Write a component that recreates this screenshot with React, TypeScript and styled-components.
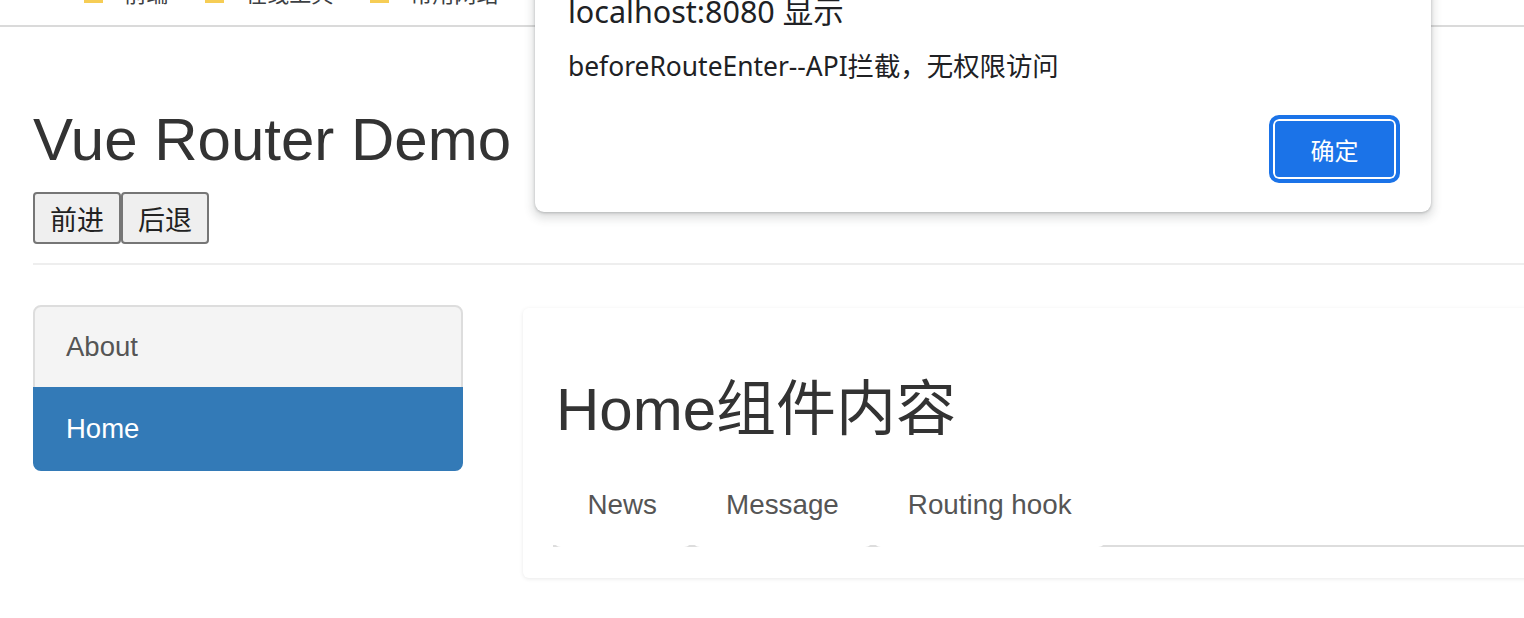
import React from 'react';
import styled, { createGlobalStyle } from 'styled-components';

const GlobalStyle = createGlobalStyle`
  html, body {
    margin: 0;
    padding: 0;
    background: #ffffff;
    overflow: hidden;
  }
  body {
    font-family: "Liberation Sans", "Noto Sans CJK SC", Arial, sans-serif;
    color: #333333;
  }
  * {
    box-sizing: border-box;
  }
`;

const bookmarks = [
  { label: '前端', gap: 36 },
  { label: '在线工具', gap: 36 },
  { label: '常用网站', gap: 30 },
];

const tabs = ['News', 'Message', 'Routing hook'];

const FolderIcon = () => (
  <FolderSvg width="21" height="17" viewBox="0 0 21 17">
    <path d="M1 2.5h6.5l2 2H20v11.5H1z" fill="#e8b93a" />
    <path d="M1 5.5h19v10.5H1z" fill="#f6cd55" />
  </FolderSvg>
);

const App = () => {
  return (
    <Browser>
      <GlobalStyle />
      <BookmarkBar>
        <AppGlyph>ɟ</AppGlyph>
        {bookmarks.map(b => (
          <Bookmark key={b.label} $gap={b.gap}>
            <FolderIcon />
            <BookmarkLabel>{b.label}</BookmarkLabel>
          </Bookmark>
        ))}
      </BookmarkBar>

      <Page>
        <Header>
          <Title>Vue Router Demo</Title>
          <HistoryButtons>
            <HistoryButton>前进</HistoryButton>
            <HistoryButton>后退</HistoryButton>
          </HistoryButtons>
        </Header>

        <Content>
          <SideList>
            <SideItem>About</SideItem>
            <SideItem $active>Home</SideItem>
          </SideList>

          <Panel>
            <PanelTitle>Home组件内容</PanelTitle>
            <Tabs>
              {tabs.map(t => (
                <Tab key={t}>{t}</Tab>
              ))}
            </Tabs>
          </Panel>
        </Content>
      </Page>

      <AlertDialog>
        <AlertTitle>localhost:8080 显示</AlertTitle>
        <AlertMessage>beforeRouteEnter--API拦截，无权限访问</AlertMessage>
        <AlertActions>
          <ConfirmButton>确定</ConfirmButton>
        </AlertActions>
      </AlertDialog>
    </Browser>
  );
};

const Browser = styled.div`
  position: relative;
  width: 1524px;
  height: 618px;
  overflow: hidden;
`;

const BookmarkBar = styled.div`
  height: 27px;
  display: flex;
  align-items: flex-end;
  padding: 0 0 24px 27px;
  border-bottom: 2px solid #dadada;
  overflow: hidden;
`;

const AppGlyph = styled.span`
  font-family: "DejaVu Sans", sans-serif;
  font-size: 22px;
  line-height: 1;
  color: #202124;
  margin-right: 50px;
  transform: translateY(-1px);
`;

const Bookmark = styled.div<{ $gap: number }>`
  display: flex;
  align-items: flex-end;
  gap: 20px;
  margin-right: ${props => props.$gap}px;
`;

const FolderSvg = styled.svg`
  flex-shrink: 0;
  transform: translateY(3px);
`;

const BookmarkLabel = styled.span`
  font-family: "Noto Sans CJK SC", sans-serif;
  font-size: 22px;
  line-height: 1;
  color: #3c4043;
  transform: translateY(2px);
`;

const Page = styled.div`
  padding-left: 33px;
`;

const Header = styled.header`
  padding: 80px 0 19px;
  border-bottom: 2px solid #eeeeee;
`;

const Title = styled.h1`
  margin: 0;
  font-size: 60px;
  line-height: 65px;
  font-weight: normal;
  color: #333333;
`;

const HistoryButtons = styled.div`
  display: flex;
  margin-top: 20px;
`;

const HistoryButton = styled.button`
  height: 52px;
  padding: 0 15px;
  font-family: "Noto Sans CJK SC", sans-serif;
  font-size: 27px;
  line-height: 1;
  color: #222222;
  background: #efefef;
  border: 2px solid #767676;
  border-radius: 4px;
`;

const Content = styled.div`
  display: flex;
  align-items: flex-start;
  gap: 60px;
  margin-top: 40px;
`;

const SideList = styled.div`
  width: 430px;
  flex-shrink: 0;
  display: flex;
  flex-direction: column;
`;

const SideItem = styled.div<{ $active?: boolean }>`
  height: 84px;
  margin-bottom: -2px;
  padding: 0 31px;
  display: flex;
  align-items: center;
  font-size: 27.5px;
  color: ${props => (props.$active ? '#ffffff' : '#555555')};
  background: ${props => (props.$active ? '#337ab7' : '#f4f4f4')};
  border: 2px solid ${props => (props.$active ? '#337ab7' : '#dddddd')};
  border-radius: ${props => (props.$active ? '0 0 8px 8px' : '8px 8px 0 0')};
`;

const Panel = styled.section`
  flex: 1;
  margin-top: 3px;
  margin-right: -40px;
  padding: 30px 30px 31px;
  background: #ffffff;
  border-radius: 6px;
  box-shadow: 0 1px 4px rgba(0, 0, 0, 0.09);
`;

const PanelTitle = styled.h2`
  margin: 39px 0 19px;
  padding-left: 3px;
  font-size: 60px;
  line-height: 66px;
  font-weight: normal;
  color: #333333;
`;

const Tabs = styled.nav`
  display: flex;
  border-bottom: 2px solid #dddddd;
`;

const Tab = styled.a`
  height: 85px;
  margin-bottom: -2px;
  padding: 0 34.5px;
  display: flex;
  align-items: center;
  font-size: 27.8px;
  color: #555555;
  background: #ffffff;
  border-radius: 8px;
`;

const AlertDialog = styled.div`
  position: absolute;
  top: -20px;
  left: 535px;
  width: 896px;
  height: 232px;
  padding: 13px 31px 29px 33px;
  display: flex;
  flex-direction: column;
  background: #ffffff;
  border-radius: 0 0 9px 9px;
  box-shadow: 0 1px 3px rgba(60, 64, 67, 0.3), 0 4px 8px 3px rgba(60, 64, 67, 0.15);
  font-family: "Noto Sans", "Noto Sans CJK SC", sans-serif;
  color: #202124;
`;

const AlertTitle = styled.div`
  font-size: 30.5px;
  line-height: 36px;
`;

const AlertMessage = styled.div`
  margin-top: 19px;
  font-size: 26.4px;
  line-height: 36px;
`;

const AlertActions = styled.div`
  margin-top: auto;
  display: flex;
  justify-content: flex-end;
`;

const ConfirmButton = styled.button`
  width: 131px;
  height: 68px;
  font-family: "Noto Sans CJK SC", sans-serif;
  font-size: 24px;
  color: #ffffff;
  background: #1b73e8;
  border: 4px solid #1b73e8;
  border-radius: 10px;
  box-shadow: inset 0 0 0 2px #ffffff;
`;

export default App;
